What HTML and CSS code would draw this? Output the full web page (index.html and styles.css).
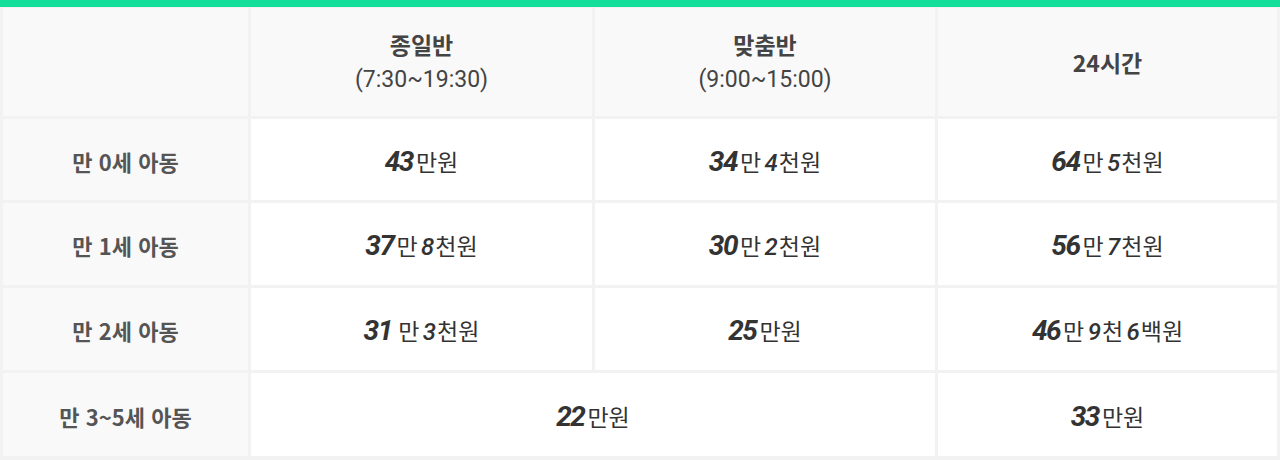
FILE: index.html
```html
<!DOCTYPE html>
<html lang="ko">
<head>
<meta charset="utf-8">
<link rel="stylesheet" href="styles.css">
</head>
<body>
<div class="topbar"></div>
<div class="grid">
  <div class="cell head"></div>
  <div class="cell head"><span class="title">종일반</span><span class="time">(7:30~19:30)</span></div>
  <div class="cell head"><span class="title">맞춤반</span><span class="time">(9:00~15:00)</span></div>
  <div class="cell head"><span class="title">24시간</span></div>

  <div class="cell label">만 0세 아동</div>
  <div class="cell val"><span class="amt"><b>43</b>만원</span></div>
  <div class="cell val"><span class="amt"><b>34</b>만 <i>4</i>천원</span></div>
  <div class="cell val"><span class="amt"><b>64</b>만 <i>5</i>천원</span></div>

  <div class="cell label">만 1세 아동</div>
  <div class="cell val"><span class="amt"><b>37</b>만 <i>8</i>천원</span></div>
  <div class="cell val"><span class="amt"><b>30</b>만 <i>2</i>천원</span></div>
  <div class="cell val"><span class="amt"><b>56</b>만 <i>7</i>천원</span></div>

  <div class="cell label">만 2세 아동</div>
  <div class="cell val"><span class="amt"><b>31</b> 만 <i>3</i>천원</span></div>
  <div class="cell val"><span class="amt"><b>25</b>만원</span></div>
  <div class="cell val"><span class="amt"><b>46</b>만 <i>9</i>천 <i>6</i>백원</span></div>

  <div class="cell label">만 3~5세 아동</div>
  <div class="cell val span2"><span class="amt"><b>22</b>만원</span></div>
  <div class="cell val"><span class="amt"><b>33</b>만원</span></div>
</div>
</body>
</html>
```

FILE: styles.css
```css
html, body {
  margin: 0;
  padding: 0;
  background: #ffffff;
}
.topbar {
  height: 7px;
  background: #14df9a;
}
.grid {
  display: grid;
  grid-template-columns: 245px 341px 340px 339px;
  grid-template-rows: 108px 81px 82px 82px 83px;
  gap: 3px;
  padding: 1px 4px 4px 3px;
  background: #f2f2f2;
}
.cell {
  display: flex;
  flex-direction: column;
  align-items: center;
  justify-content: center;
  background: #ffffff;
  color: #333333;
}
.head {
  background: #f9f9f9;
}
.title {
  font-family: "Noto Sans CJK KR", sans-serif;
  font-weight: 700;
  font-size: 23px;
  line-height: 35px;
  color: #444444;
}
.time {
  font-family: Roboto, "Noto Sans CJK KR", sans-serif;
  font-size: 23px;
  line-height: 35px;
  color: #444444;
}
.label {
  background: #f9f9f9;
  font-family: "Noto Sans CJK KR", sans-serif;
  font-weight: 700;
  font-size: 22px;
  color: #555555;
  padding-top: 2px;
}
.val {
  padding-top: 2px;
}
.amt {
  font-family: "Noto Sans CJK KR", sans-serif;
  font-size: 23px;
  color: #333333;
  white-space: nowrap;
  word-spacing: -3px;
}
.amt b {
  font-family: Roboto, sans-serif;
  font-weight: 700;
  font-style: italic;
  font-size: 28px;
  letter-spacing: -1.5px;
  margin-right: 3px;
  color: #333333;
}
.amt i {
  font-family: Roboto, sans-serif;
  font-weight: 500;
  font-style: italic;
  font-size: 24px;
  margin-right: 1px;
}
.span2 {
  grid-column: span 2;
}
```
